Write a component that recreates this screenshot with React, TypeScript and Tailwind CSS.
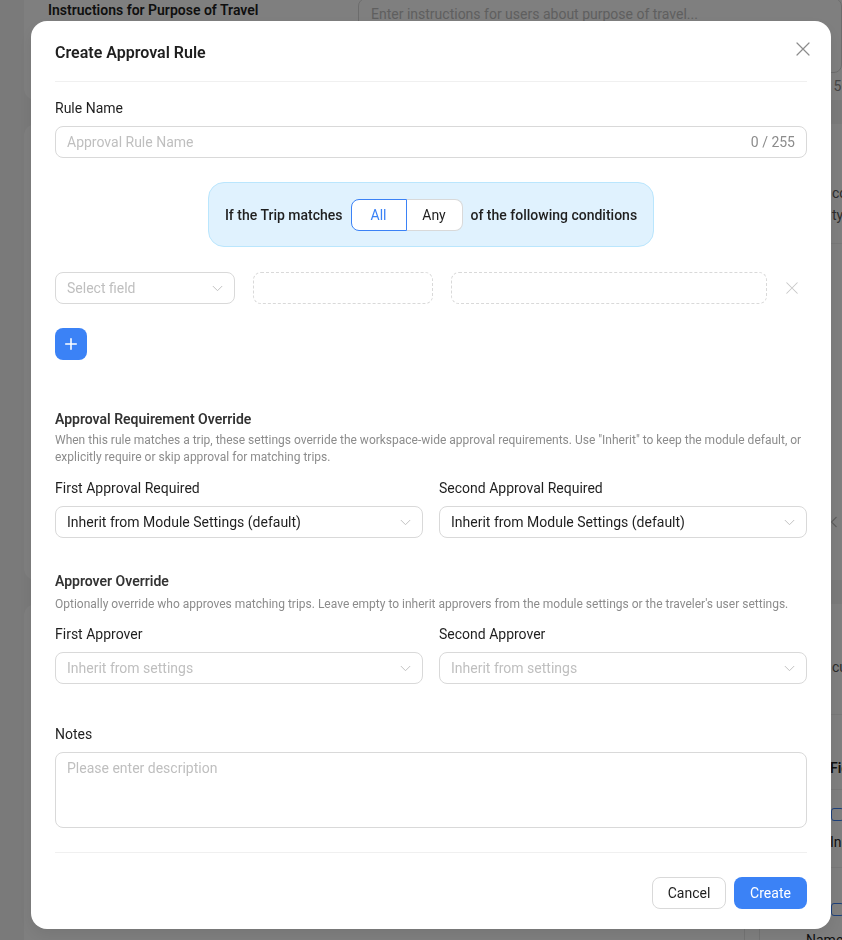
import React from "react";

const CloseIcon = ({ className = "" }: { className?: string }) => (
  <svg viewBox="0 0 16 16" className={className} fill="none" stroke="currentColor" strokeWidth="1.2" strokeLinecap="round">
    <path d="M2 2 L14 14 M14 2 L2 14" />
  </svg>
);

const ChevronDown = ({ className = "" }: { className?: string }) => (
  <svg viewBox="0 0 12 8" className={className} fill="none" stroke="currentColor" strokeWidth="1.1" strokeLinecap="round" strokeLinejoin="round">
    <path d="M1 1.5 L6 6.5 L11 1.5" />
  </svg>
);

const PlusIcon = ({ className = "" }: { className?: string }) => (
  <svg viewBox="0 0 16 16" className={className} fill="none" stroke="currentColor" strokeWidth="1.8" strokeLinecap="round">
    <path d="M8 2 V14 M2 8 H14" />
  </svg>
);

function Select({ value, placeholder }: { value?: string; placeholder?: string }) {
  return (
    <div className="flex h-8 flex-1 items-center rounded-lg border border-[#d9d9d9] bg-white pl-[11px] pr-[11px]">
      <span className={`flex-1 truncate text-sm ${value ? "text-[#1f1f1f]" : "text-[#bfbfbf]"}`}>
        {value ?? placeholder}
      </span>
      <ChevronDown className="h-[7px] w-[11px] text-[#bfbfbf]" />
    </div>
  );
}

function Field({ label, children }: { label: string; children: React.ReactNode }) {
  return (
    <div className="flex flex-1 flex-col">
      <span className="text-sm leading-[22px] text-[#1f1f1f]">{label}</span>
      <div className="mt-[7px] flex">{children}</div>
    </div>
  );
}

function BackgroundPage() {
  return (
    <div className="flex min-h-screen flex-col gap-6 bg-[#f5f5f5] pl-6">
      {/* travel purpose card */}
      <div className="-mt-5 flex h-[120px] overflow-hidden rounded-l-xl bg-white pl-6">
        <div className="w-[310px] shrink-0 pt-[19px] text-sm font-semibold leading-[22px] text-[#1f1f1f]">
          Instructions for Purpose of Travel
        </div>
        <div className="flex min-w-0 flex-1 flex-col pt-[18px]">
          <div className="h-[75px] rounded-lg border border-[#d9d9d9] px-3 pt-[4px] text-sm leading-[22px] text-[#bfbfbf]">
            Enter instructions for users about purpose of travel...
          </div>
          <span className="mt-[2px] pl-[455px] text-sm leading-[22px] text-[#8c8c8c] whitespace-nowrap">0 / 500</span>
        </div>
      </div>

      {/* policy card */}
      <div className="flex h-[456px] overflow-hidden rounded-l-xl bg-white pl-6">
        <div className="w-[310px] shrink-0" />
        <div className="flex min-w-0 flex-1 flex-col pt-[58px]">
          <div className="flex flex-col text-sm leading-[22px] text-[#595959]">
            <span className="pl-[474px] whitespace-nowrap">conditions apply</span>
            <span className="pl-[474px] whitespace-nowrap">type policies</span>
          </div>
          <div className="mt-[17px] h-px bg-[#f0f0f0]" />
          <div className="mt-[272px] flex pl-[472px] text-[#bfbfbf]">
            <svg viewBox="0 0 8 12" className="h-3 w-2" fill="none" stroke="currentColor" strokeWidth="1.2">
              <path d="M6.5 1 L1.5 6 L6.5 11" />
            </svg>
          </div>
        </div>
      </div>

      {/* fields card */}
      <div className="flex flex-1 overflow-hidden rounded-l-xl bg-white pl-6">
        <div className="w-[310px] shrink-0" />
        <div className="flex min-w-0 flex-1 flex-col pt-[52px]">
          <span className="pl-[474px] text-sm leading-[22px] text-[#595959] whitespace-nowrap">custom</span>
          <div className="mt-[36px] h-px bg-[#f0f0f0]" />
          <span className="mt-[42px] pl-[472px] text-sm font-semibold leading-[22px] text-[#1f1f1f] whitespace-nowrap">Field</span>
          <div className="mt-[10px] h-px bg-[#f0f0f0]" />
          <div className="mt-[18px] ml-[473px] h-[13px] w-[13px] rounded-[3px] border border-[#3b82f6]" />
          <span className="mt-[10px] pl-[472px] text-sm leading-[22px] text-[#1f1f1f] whitespace-nowrap">Input</span>
          <div className="mt-[14px] h-px bg-[#f0f0f0]" />
          <div className="mt-[35px] ml-[473px] h-[13px] w-[13px] rounded-[3px] border border-[#3b82f6]" />
          <div className="mt-[1px] flex">
            <div className="ml-[386px] h-[30px] w-[16px] shrink-0 border-x border-[#e8e8e8]" />
            <span className="ml-[46px] mt-[12px] text-sm leading-[22px] text-[#1f1f1f] whitespace-nowrap">Name</span>
          </div>
        </div>
      </div>
    </div>
  );
}

export default function App() {
  return (
    <div className="relative h-[940px] w-full overflow-hidden font-['Roboto',_'Inter',_sans-serif]">
      <BackgroundPage />

      <div className="fixed inset-0 bg-black/50 pl-[31px] pt-[21px]">
        <div className="relative flex w-[800px] flex-col rounded-2xl bg-white px-6 pb-5 pt-5 shadow-[0_6px_16px_rgba(0,0,0,0.08)]">
          <h2 className="text-base font-semibold leading-6 text-[#1f1f1f]">Create Approval Rule</h2>
          <button className="absolute right-5 top-5 text-[#8c8c8c]" aria-label="Close">
            <CloseIcon className="h-4 w-4" />
          </button>
          <div className="mt-4 h-px bg-[#f0f0f0]" />

          {/* rule name */}
          <span className="mt-[15px] text-sm leading-[22px] text-[#1f1f1f]">Rule Name</span>
          <div className="mt-[7px] flex h-8 items-center rounded-lg border border-[#d9d9d9] px-[11px] text-sm">
            <span className="flex-1 text-[#bfbfbf]">Approval Rule Name</span>
            <span className="text-[#8c8c8c]">0 / 255</span>
          </div>

          {/* match mode */}
          <div className="mt-6 flex justify-center">
            <div className="flex h-[65px] items-center gap-2 rounded-2xl border border-[#bae6fd] bg-[#e0f2fe] px-4 text-sm">
              <span className="font-medium text-[#1f1f1f]">If the Trip matches</span>
              <div className="flex">
                <button className="h-8 w-14 rounded-l-lg border border-[#3b82f6] bg-white text-[#3b82f6]">All</button>
                <button className="h-8 w-14 rounded-r-lg border border-l-0 border-[#d9d9d9] bg-white text-[#1f1f1f]">Any</button>
              </div>
              <span className="font-medium text-[#1f1f1f]">of the following conditions</span>
            </div>
          </div>

          {/* condition row */}
          <div className="mt-[25px] flex h-8 items-center gap-[18px]">
            <div className="flex h-8 w-[180px] shrink-0 items-center rounded-lg border border-[#d9d9d9] px-[11px]">
              <span className="flex-1 text-sm text-[#bfbfbf]">Select field</span>
              <ChevronDown className="h-[7px] w-[11px] text-[#bfbfbf]" />
            </div>
            <div className="h-8 w-[180px] shrink-0 rounded-lg border border-dashed border-[#d9d9d9]" />
            <div className="h-8 w-[316px] shrink-0 rounded-lg border border-dashed border-[#d9d9d9]" />
            <div className="flex flex-1 justify-end pr-[10px] text-[#c8c8c8]">
              <CloseIcon className="h-[14px] w-[14px]" />
            </div>
          </div>

          <button className="mt-6 flex h-8 w-8 items-center justify-center rounded-lg bg-[#3b82f6] text-white">
            <PlusIcon className="h-[14px] w-[14px]" />
          </button>

          {/* approval requirement override */}
          <span className="mt-12 text-sm font-semibold leading-[22px] text-[#333333]">Approval Requirement Override</span>
          <p className="mt-[2px] text-xs leading-[17px] text-[#8c8c8c]">
            When this rule matches a trip, these settings override the workspace-wide approval requirements. Use "Inherit" to keep the module default, or explicitly require or skip approval for matching trips.
          </p>
          <div className="mt-[11px] flex gap-4">
            <Field label="First Approval Required">
              <Select value="Inherit from Module Settings (default)" />
            </Field>
            <Field label="Second Approval Required">
              <Select value="Inherit from Module Settings (default)" />
            </Field>
          </div>

          {/* approver override */}
          <span className="mt-8 text-sm font-semibold leading-[22px] text-[#333333]">Approver Override</span>
          <p className="mt-[4px] text-xs leading-[17px] text-[#8c8c8c]">
            Optionally override who approves matching trips. Leave empty to inherit approvers from the module settings or the traveler's user settings.
          </p>
          <div className="mt-[10px] flex gap-4">
            <Field label="First Approver">
              <Select placeholder="Inherit from settings" />
            </Field>
            <Field label="Second Approver">
              <Select placeholder="Inherit from settings" />
            </Field>
          </div>

          {/* notes */}
          <span className="mt-[39px] text-sm leading-[22px] text-[#1f1f1f]">Notes</span>
          <div className="mt-[7px] h-[76px] rounded-lg border border-[#d9d9d9] px-[11px] pt-[4px] text-sm leading-[22px] text-[#bfbfbf]">
            Please enter description
          </div>

          <div className="mt-6 h-px bg-[#f0f0f0]" />

          <div className="mt-6 flex justify-end gap-2">
            <button className="h-8 w-[74px] rounded-lg border border-[#d9d9d9] bg-white text-sm text-[#1f1f1f]">Cancel</button>
            <button className="h-8 w-[73px] rounded-lg bg-[#3b82f6] text-sm text-white">Create</button>
          </div>
        </div>
      </div>
    </div>
  );
}
